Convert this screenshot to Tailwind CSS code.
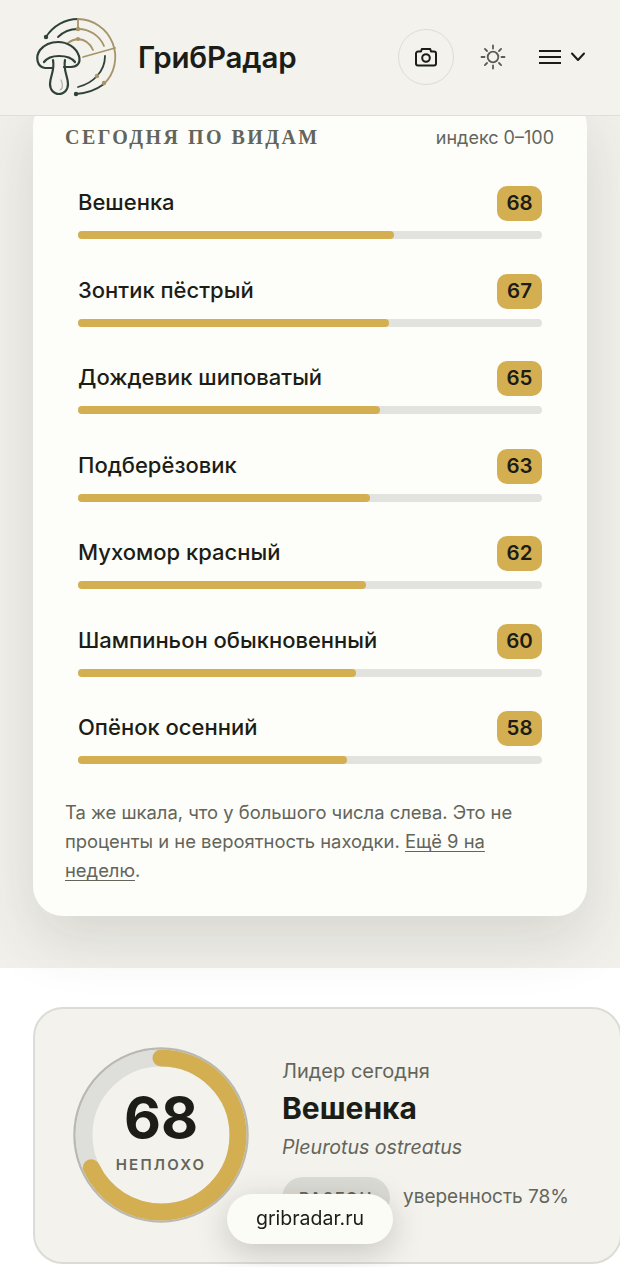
<!DOCTYPE html>
<html lang="ru">
<head>
  <meta charset="UTF-8" />
  <meta name="viewport" content="width=device-width, initial-scale=1.0"/>
  <title>ГрибРадар</title>
  <script src="https://cdn.jsdelivr.net/npm/@tailwindcss/browser@4"></script>
</head>
<body class="h-[1267px] overflow-hidden bg-white font-['Inter',sans-serif] text-[#1c1d17]">

  <!-- Header -->
  <header class="relative z-10 h-[116px] flex items-center bg-[#f3f2ed] border-b border-[#dfded8] pl-[33px] pr-[34px]">
    <svg class="w-[86px] h-[86px] shrink-0 -mt-[2px]" viewBox="33 14 86 86" fill="none" stroke-linecap="round">
      <!-- radar rings -->
      <path d="M46 37 A38 38 0 0 1 78 19" stroke="#2f4238" stroke-width="1.8"/>
      <path d="M78 19 A38 38 0 0 1 104 84" stroke="#a6946a" stroke-width="1.8"/>
      <path d="M104 84 Q92 93 76 94" stroke="#2f4238" stroke-width="1.8"/>
      <path d="M58 37 A28 28 0 0 1 78 29" stroke="#2f4238" stroke-width="1.8"/>
      <path d="M78 29 A28 28 0 0 1 104 46" stroke="#a6946a" stroke-width="1.8"/>
      <path d="M105 56 A29 29 0 0 1 97 76" stroke="#2f4238" stroke-width="1.8"/>
      <path d="M97 76 Q90 84 78 87" stroke="#2f4238" stroke-width="1.8"/>
      <path d="M68 43 A18 18 0 0 1 78 39" stroke="#a6946a" stroke-width="1.8"/>
      <path d="M78 39 A18 18 0 0 1 93 50" stroke="#a6946a" stroke-width="1.8"/>
      <path d="M78 19 V29 M83 57 L115 48" stroke="#a6946a" stroke-width="1.8"/>
      <circle cx="78" cy="29" r="2.2" fill="#a6946a"/>
      <circle cx="78" cy="39" r="2" fill="#a6946a"/>
      <circle cx="46" cy="37" r="2.2" fill="#2f4238"/>
      <circle cx="76" cy="94" r="2.2" fill="#2f4238"/>
      <circle cx="97" cy="76" r="2.2" fill="#a6946a"/>
      <circle cx="104" cy="83" r="2.2" fill="#a6946a"/>
      <!-- mushroom -->
      <path d="M52 68 H45 C37 67 35 57 40 50 C45 44 52 42 58 42 C67 42 76 47 79 56 C81 63 77 67 71 67 H64" stroke="#2f4238" stroke-width="2.2"/>
      <path d="M44 62 C47 58 53 56 59 56 C66 56 72 58 75 62" stroke="#2f4238" stroke-width="2.2"/>
      <path d="M53 60 C55 71 50 76 50 84 C50 90 54 94 59 94 C64 94 68 90 68 84 C68 76 63 71 65 60" stroke="#2f4238" stroke-width="2.2"/>
      <path d="M61 80 C63 84 63 89 60 90" stroke="#a9b0a6" stroke-width="1.2"/>
    </svg>
    <div class="ml-[19px] text-[29.5px] font-semibold tracking-[-0.2px]">ГрибРадар</div>
    <button class="ml-auto -mt-[2px] w-[56px] h-[56px] rounded-full border border-[#dcdbd5] flex items-center justify-center">
      <svg class="w-[24px] h-[24px] mt-[1px]" viewBox="0 0 24 24" fill="none" stroke="#1c1d17" stroke-width="2" stroke-linejoin="round">
        <path d="M2 8.5 a2 2 0 0 1 2-2 h3 l.8-2.5 h8.4 l.8 2.5 h3 a2 2 0 0 1 2 2 v10 a2 2 0 0 1-2 2 h-16 a2 2 0 0 1-2-2 z"/>
        <circle cx="12" cy="13" r="3.8"/>
      </svg>
    </button>
    <svg class="ml-[26px] -mt-[2px] w-[26px] h-[26px]" viewBox="0 0 26 26" fill="none" stroke="#5a5c52" stroke-width="1.8" stroke-linecap="round">
      <circle cx="13" cy="13" r="5.3"/>
      <path d="M13 1.5v3M13 21.5v3M1.5 13h3M21.5 13h3M4.9 4.9l2.1 2.1M19 19l2.1 2.1M4.9 21.1L7 19M19 7l2.1-2.1"/>
    </svg>
    <svg class="ml-[33px] -mt-[2px] w-[22px] h-[16px]" viewBox="0 0 22 16" fill="none" stroke="#1c1d17" stroke-width="2.2">
      <path d="M0 2h22M0 8h22M0 14h22"/>
    </svg>
    <svg class="ml-[9px] -mt-[2px] w-[16px] h-[10px]" viewBox="0 0 16 10" fill="none" stroke="#1c1d17" stroke-width="2" stroke-linecap="round" stroke-linejoin="round">
      <path d="M2 1.5L8 8l6-6.5"/>
    </svg>
  </header>

  <!-- Species section -->
  <section class="h-[872px] bg-[#f1f0eb] px-[33px]">
    <div class="-mt-[20px] relative h-[820px] rounded-[30px] bg-[#fdfdf9] pt-[20px] shadow-[0_24px_60px_rgba(60,60,40,0.14)]">
      <div class="flex items-center justify-between h-[42px] pl-[32px] pr-[33px]">
        <h2 class="font-['Liberation_Serif',serif] font-bold text-[20px] tracking-[2.45px] text-[#63655b]">СЕГОДНЯ ПО ВИДАМ</h2>
        <span class="text-[18px] text-[#63655b]">индекс 0–100</span>
      </div>

      <ul class="mt-[28px] pl-[45px] pr-[45px]">
        <li class="h-[87.5px]">
          <div class="flex items-center justify-between h-[35px]"><span class="text-[22px] font-medium -mt-[2px]">Вешенка</span><span class="w-[45px] h-[35px] rounded-[10px] bg-[#d4af52] flex items-center justify-center text-[20.5px] font-semibold">68</span></div>
          <div class="mt-[10px] h-[8px] rounded-full bg-[#e2e2df]"><div class="h-full rounded-full bg-[#d4af52] w-[68%]"></div></div>
        </li>
        <li class="h-[87.5px]">
          <div class="flex items-center justify-between h-[35px]"><span class="text-[22px] font-medium -mt-[2px]">Зонтик пёстрый</span><span class="w-[45px] h-[35px] rounded-[10px] bg-[#d4af52] flex items-center justify-center text-[20.5px] font-semibold">67</span></div>
          <div class="mt-[10px] h-[8px] rounded-full bg-[#e2e2df]"><div class="h-full rounded-full bg-[#d4af52] w-[67%]"></div></div>
        </li>
        <li class="h-[87.5px]">
          <div class="flex items-center justify-between h-[35px]"><span class="text-[22px] font-medium -mt-[2px]">Дождевик шиповатый</span><span class="w-[45px] h-[35px] rounded-[10px] bg-[#d4af52] flex items-center justify-center text-[20.5px] font-semibold">65</span></div>
          <div class="mt-[10px] h-[8px] rounded-full bg-[#e2e2df]"><div class="h-full rounded-full bg-[#d4af52] w-[65%]"></div></div>
        </li>
        <li class="h-[87.5px]">
          <div class="flex items-center justify-between h-[35px]"><span class="text-[22px] font-medium -mt-[2px]">Подберёзовик</span><span class="w-[45px] h-[35px] rounded-[10px] bg-[#d4af52] flex items-center justify-center text-[20.5px] font-semibold">63</span></div>
          <div class="mt-[10px] h-[8px] rounded-full bg-[#e2e2df]"><div class="h-full rounded-full bg-[#d4af52] w-[63%]"></div></div>
        </li>
        <li class="h-[87.5px]">
          <div class="flex items-center justify-between h-[35px]"><span class="text-[22px] font-medium -mt-[2px]">Мухомор красный</span><span class="w-[45px] h-[35px] rounded-[10px] bg-[#d4af52] flex items-center justify-center text-[20.5px] font-semibold">62</span></div>
          <div class="mt-[10px] h-[8px] rounded-full bg-[#e2e2df]"><div class="h-full rounded-full bg-[#d4af52] w-[62%]"></div></div>
        </li>
        <li class="h-[87.5px]">
          <div class="flex items-center justify-between h-[35px]"><span class="text-[22px] font-medium -mt-[2px]">Шампиньон обыкновенный</span><span class="w-[45px] h-[35px] rounded-[10px] bg-[#d4af52] flex items-center justify-center text-[20.5px] font-semibold">60</span></div>
          <div class="mt-[10px] h-[8px] rounded-full bg-[#e2e2df]"><div class="h-full rounded-full bg-[#d4af52] w-[60%]"></div></div>
        </li>
        <li class="h-[87.5px]">
          <div class="flex items-center justify-between h-[35px]"><span class="text-[22px] font-medium -mt-[2px]">Опёнок осенний</span><span class="w-[45px] h-[35px] rounded-[10px] bg-[#d4af52] flex items-center justify-center text-[20.5px] font-semibold">58</span></div>
          <div class="mt-[10px] h-[8px] rounded-full bg-[#e2e2df]"><div class="h-full rounded-full bg-[#d4af52] w-[58%]"></div></div>
        </li>
      </ul>

      <p class="-mt-[1px] pl-[32px] pr-[30px] text-[18.4px] leading-[29px] text-[#63655b]">Та же шкала, что у большого числа слева. Это не проценты и не вероятность находки. <a class="underline underline-offset-[3px]">Ещё 9 на неделю</a>.</p>
    </div>
  </section>

  <!-- Leader card -->
  <section class="pt-[39px] pl-[33px]">
    <div class="w-[589px] h-[257px] rounded-[30px] border-2 border-[#dcdcd6] bg-[#f3f2ed] flex items-center pl-[38px]">
      <div class="relative w-[176px] h-[176px] shrink-0 -mt-[2px]">
        <svg class="absolute inset-0" viewBox="0 0 176 176" fill="none">
          <circle cx="88" cy="88" r="86.5" stroke="#b9b9b2" stroke-width="2.5"/>
          <circle cx="88" cy="88" r="77" stroke="#dededa" stroke-width="17"/>
          <circle cx="88" cy="88" r="77" stroke="#d4af52" stroke-width="17" stroke-linecap="round" pathLength="100" stroke-dasharray="68 100" transform="rotate(-90 88 88)"/>
        </svg>
        <div class="absolute inset-0 flex flex-col items-center justify-center">
          <div class="text-[57px] leading-[56px] font-bold -mt-[2px]">68</div>
          <div class="mt-[8px] text-[15px] font-semibold tracking-[2.2px] text-[#63655b]">НЕПЛОХО</div>
        </div>
      </div>
      <div class="ml-[33px] mt-[4px]">
        <div class="text-[20px] text-[#63655b]">Лидер сегодня</div>
        <div class="mt-[4px] text-[30px] leading-[36px] font-bold">Вешенка</div>
        <div class="mt-[7px] text-[19.6px] italic text-[#63655b]">Pleurotus ostreatus</div>
        <div class="mt-[14px] flex items-center">
          <span class="w-[108px] h-[42px] rounded-full bg-[#dcdcd6] flex items-center justify-center text-[16px] font-semibold tracking-[1.7px] text-[#63655b]">РАЗГОН</span>
          <span class="ml-[13px] text-[19px] text-[#63655b]">уверенность 78%</span>
        </div>
      </div>
    </div>
  </section>

  <!-- Domain pill -->
  <div class="fixed z-20 left-[227px] top-[1194px] w-[166px] h-[50px] rounded-full bg-[#fcfcf6] flex items-center justify-center text-[19.5px] shadow-[0_8px_32px_rgba(40,40,30,0.22)]">gribradar.ru</div>
</body>
</html>
